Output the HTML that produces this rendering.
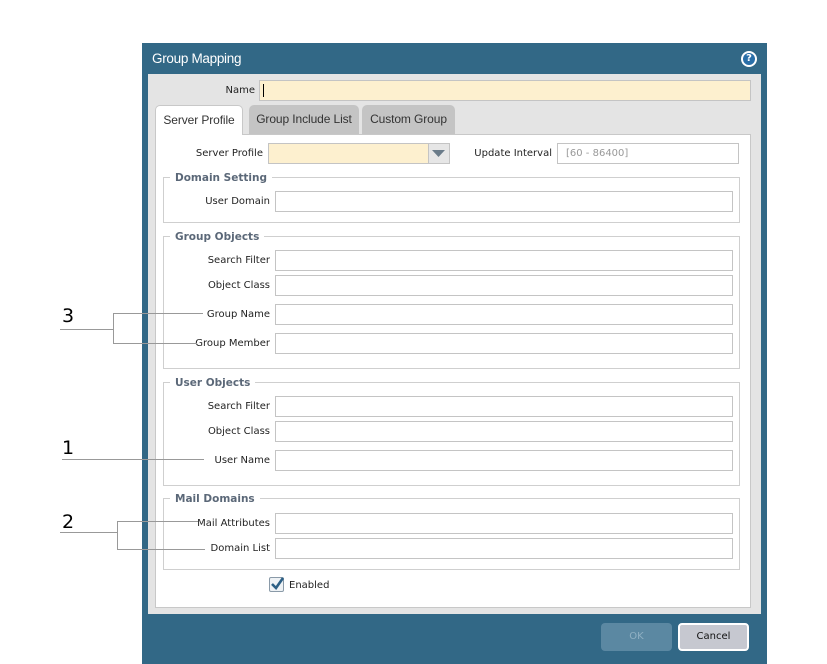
<!DOCTYPE html>
<html><head><meta charset="utf-8"><style>
*{margin:0;padding:0;box-sizing:border-box}
body{width:827px;height:664px;background:#fff;position:relative;overflow:hidden;font-family:"DejaVu Sans","Liberation Sans",sans-serif;font-size:10px;color:#222}
.a{position:absolute}
.dlg{left:142px;top:43px;width:625px;height:621px;background:#326886}
.title{left:152px;top:51px;color:#fff;font-family:"Liberation Sans",sans-serif;font-size:13.5px;letter-spacing:-0.3px}
.grey{left:148px;top:74px;width:613px;height:540px;background:#e4e4e4}
.panel{left:155px;top:134px;width:596px;height:474px;background:#fff;border:1px solid #c8c8c8}
.in{position:absolute;height:21px;background:#fff;border:1px solid #c4c4c4}
.lbl{position:absolute;text-align:right;white-space:nowrap;margin-top:1px}
.fs{position:absolute;border:1px solid #cfcfcf}
.lg{position:absolute;background:#fff;padding:0 5px;font-weight:bold;color:#5b6878;font-size:10.5px;margin-top:1px}
.tab{position:absolute;top:105px;height:29px;border-radius:5px 5px 0 0;background:#c4c4c4;font-family:"Liberation Sans",sans-serif;font-size:12px;color:#333;text-align:center;line-height:28px;letter-spacing:-0.1px}
.ln{position:absolute;background:#999}
.num{position:absolute;font-family:"DejaVu Sans",sans-serif;font-size:19px;color:#000}
</style></head><body>
<div class="a dlg"></div>
<div class="a title">Group Mapping</div>
<div class="a" style="left:741px;top:51px;width:16px;height:16px;border-radius:50%;background:#fff;"></div>
<div class="a" style="left:743px;top:53px;width:12px;height:12px;border-radius:50%;background:#2a6fa8;color:#fff;font-weight:bold;font-size:10px;line-height:12px;text-align:center">?</div>
<div class="a grey"></div>
<div class="lbl" style="left:200px;top:84px;width:55px">Name</div>
<div class="in" style="left:259px;top:80px;width:492px;background:#fdf0cf"></div>
<div class="a" style="left:263px;top:84px;width:1px;height:13px;background:#000"></div>
<div class="a panel"></div>
<div class="tab" style="left:155px;width:88px;background:#fff;border:1px solid #c8c8c8;border-bottom:none;height:30px">Server Profile</div>
<div class="tab" style="left:249px;width:110px">Group Include List</div>
<div class="tab" style="left:362px;width:93px">Custom Group</div>

<div class="lbl" style="left:150px;top:147px;width:113px">Server Profile</div>
<div class="in" style="left:268px;top:143px;width:182px;height:21px;background:#fdf0cf"></div>
<div class="a" style="left:428px;top:144px;width:21px;height:19px;background:#e6e6e6;border-left:1px solid #c4c4c4"></div>
<svg class="a" style="left:432px;top:150px" width="13" height="7"><path d="M0 0H13L6.5 7Z" fill="#6a7b89"/></svg>
<div class="lbl" style="left:470px;top:147px;width:82px">Update Interval</div>
<div class="in" style="left:557px;top:143px;width:182px;color:#999;padding:4px 0 0 8px">[60 - 86400]</div>

<div class="fs" style="left:163px;top:177px;width:577px;height:46px"></div>
<div class="lg" style="left:170px;top:171px">Domain Setting</div>
<div class="lbl" style="left:180px;top:195px;width:90px">User Domain</div>
<div class="in" style="left:275px;top:191px;width:458px"></div>

<div class="fs" style="left:163px;top:236px;width:577px;height:133px"></div>
<div class="lg" style="left:170px;top:230px">Group Objects</div>
<div class="lbl" style="left:180px;top:254px;width:90px">Search Filter</div>
<div class="in" style="left:275px;top:250px;width:458px"></div>
<div class="lbl" style="left:180px;top:279px;width:90px">Object Class</div>
<div class="in" style="left:275px;top:275px;width:458px"></div>
<div class="lbl" style="left:180px;top:308px;width:90px">Group Name</div>
<div class="in" style="left:275px;top:304px;width:458px"></div>
<div class="lbl" style="left:180px;top:337px;width:90px">Group Member</div>
<div class="in" style="left:275px;top:333px;width:458px"></div>

<div class="fs" style="left:163px;top:382px;width:577px;height:104px"></div>
<div class="lg" style="left:170px;top:376px">User Objects</div>
<div class="lbl" style="left:180px;top:400px;width:90px">Search Filter</div>
<div class="in" style="left:275px;top:396px;width:458px"></div>
<div class="lbl" style="left:180px;top:425px;width:90px">Object Class</div>
<div class="in" style="left:275px;top:421px;width:458px"></div>
<div class="lbl" style="left:180px;top:454px;width:90px">User Name</div>
<div class="in" style="left:275px;top:450px;width:458px"></div>

<div class="fs" style="left:163px;top:498px;width:577px;height:72px"></div>
<div class="lg" style="left:170px;top:492px">Mail Domains</div>
<div class="lbl" style="left:180px;top:517px;width:90px">Mail Attributes</div>
<div class="in" style="left:275px;top:513px;width:458px"></div>
<div class="lbl" style="left:180px;top:542px;width:90px">Domain List</div>
<div class="in" style="left:275px;top:538px;width:458px"></div>

<div class="a" style="left:269px;top:577px;width:15px;height:15px;border:1px solid #8a9aa8;border-radius:2px;background:#eef2f5"></div>
<svg class="a" style="left:270px;top:576px" width="15" height="15"><path d="M2 8L6 12L13 2" stroke="#2c5f85" stroke-width="2.6" fill="none"/></svg>
<div class="a" style="left:289px;top:580px">Enabled</div>

<div class="a" style="left:601px;top:623px;width:71px;height:28px;border-radius:4px;background:#5b88a2;color:#8fb0c3;text-align:center;line-height:28px">OK</div>
<div class="a" style="left:678px;top:623px;width:71px;height:28px;border-radius:4px;background:#c6c8d0;border:2px solid #fff;color:#111;text-align:center;line-height:24px">Cancel</div>

<div class="num" style="left:62px;top:305px">3</div>
<div class="ln" style="left:60px;top:329px;width:53px;height:1px"></div>
<div class="ln" style="left:113px;top:313px;width:1px;height:31px"></div>
<div class="ln" style="left:113px;top:313px;width:90px;height:1px"></div>
<div class="ln" style="left:113px;top:343px;width:84px;height:1px"></div>
<div class="num" style="left:62px;top:437px">1</div>
<div class="ln" style="left:62px;top:459px;width:142px;height:1px"></div>
<div class="num" style="left:62px;top:511px">2</div>
<div class="ln" style="left:60px;top:532px;width:57px;height:1px"></div>
<div class="ln" style="left:117px;top:521px;width:1px;height:29px"></div>
<div class="ln" style="left:117px;top:521px;width:81px;height:1px"></div>
<div class="ln" style="left:117px;top:549px;width:88px;height:1px"></div>
</body></html>
